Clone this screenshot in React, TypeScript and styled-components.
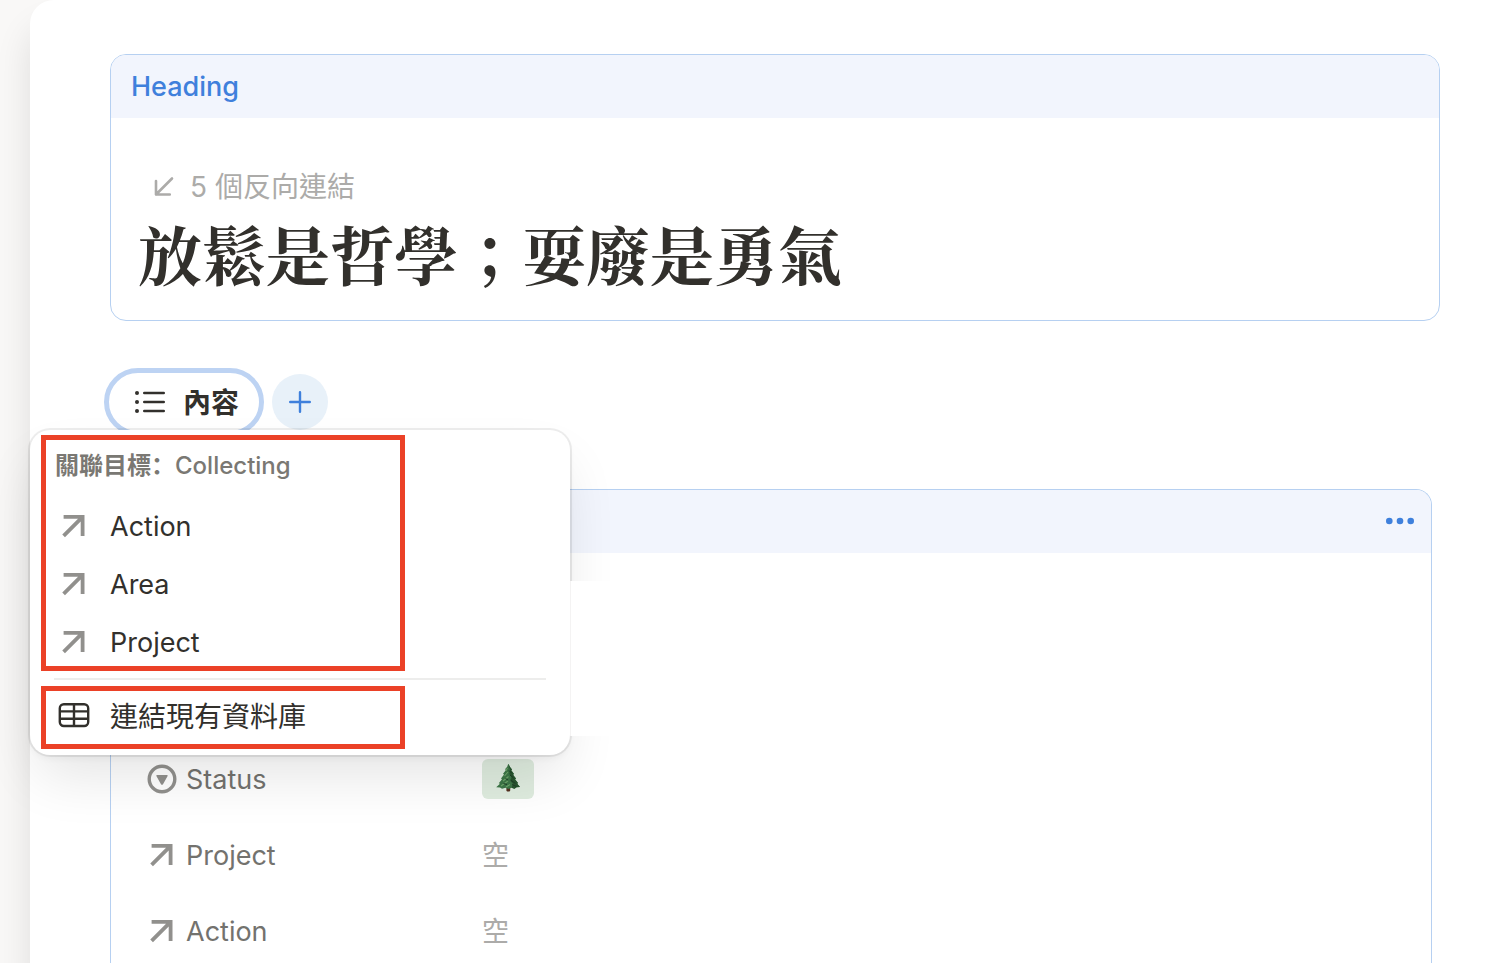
import React from "react";
import styled, { createGlobalStyle } from "styled-components";

const GlobalStyle = createGlobalStyle`
  *, *::before, *::after { box-sizing: border-box; }
  body {
    margin: 0;
    background: #f9f8f7;
    color: #32302c;
    font-family: Inter, "Noto Sans CJK TC", sans-serif;
    font-size: 27px;
    line-height: 40px;
  }
  button { font: inherit; color: inherit; background: none; border: 0; padding: 0; cursor: pointer; }
  svg { display: block; flex: none; }
`;

const Shell = styled.div`
  height: 100vh;
  padding-left: 30px;
  overflow: hidden;
`;

const Page = styled.main`
  display: flex;
  flex-direction: column;
  min-height: 100%;
  padding: 54px 65px 0 74px;
  background: #fff;
  border-radius: 24px 0 0 0;
  box-shadow: 0 28px 36px rgba(0, 0, 0, 0.11);
`;

const Card = styled.section<{ $open?: boolean }>`
  margin-left: 6px;
  margin-right: ${(p) => (p.$open ? 8 : 0)}px;
  flex: ${(p) => (p.$open ? "1 0 auto" : "none")};
  border: 1px solid #b6d0f1;
  border-bottom-width: ${(p) => (p.$open ? 0 : 1)}px;
  border-radius: ${(p) => (p.$open ? "16px 16px 0 0" : "16px")};
  overflow: hidden;
`;

const CardHeader = styled.header<{ $end?: boolean }>`
  display: flex;
  align-items: center;
  justify-content: ${(p) => (p.$end ? "flex-end" : "flex-start")};
  height: 63px;
  padding: 0 16px 0 20px;
  background: #f2f5fd;
  color: #3f80dc;
  font-weight: 500;
`;

const HeadingBody = styled.div`
  padding: 49px 27px 28px;
`;

const Backlinks = styled.button`
  display: flex;
  align-items: center;
  gap: 14px;
  padding-left: 16px;
  color: #acaba9;
  font-size: 28px;
`;

const Title = styled.h1`
  margin: 6px 0 0;
  font-family: "Noto Serif CJK TC", "Songti TC", "Noto Sans CJK TC", serif;
  font-size: 64px;
  line-height: 79px;
  font-weight: 700;
`;

const Tabs = styled.div`
  position: relative;
  z-index: 1;
  display: flex;
  align-items: center;
  gap: 8px;
  margin: 47px 0 53px;
`;

const Tab = styled.button`
  display: flex;
  align-items: center;
  gap: 18px;
  width: 160px;
  height: 68px;
  padding: 2px 0 0 26px;
  border: 5px solid #bdd3f3;
  border-radius: 34px;
  font-size: 28px;
  font-weight: 600;
`;

const AddButton = styled.button`
  display: grid;
  place-items: center;
  width: 56px;
  height: 56px;
  border-radius: 50%;
  background: #e8f1f9;
  color: #3f80dc;
`;

const Menu = styled.div`
  position: absolute;
  top: 62px;
  left: -74px;
  width: 540px;
  padding: 5px 11px 6px;
  background: #fff;
  border-radius: 20px;
  box-shadow:
    0 28px 56px -8px rgba(0, 0, 0, 0.11),
    0 4px 8px -2px rgba(0, 0, 0, 0.06),
    0 0 0 2px rgba(0, 0, 0, 0.07);
`;

const Outlined = styled.div`
  display: flex;
  flex-direction: column;
  gap: 10px;
  width: 364px;
  border: 5px solid #eb4127;
`;

const MenuLabel = styled.div`
  padding-left: 9px;
  color: #7a7873;
  font-family: Inter, "Noto Sans CJK SC", sans-serif;
  font-size: 24px;
  line-height: 52px;
  font-weight: 500;
`;

const LabelPrefix = styled.span`
  font-weight: 600;
`;

const MenuItem = styled.button<{ $tall?: boolean }>`
  display: flex;
  align-items: center;
  gap: 20px;
  height: ${(p) => (p.$tall ? 53 : 48)}px;
  padding: ${(p) => (p.$tall ? "0 0 2px 12px" : "2px 0 0 12px")};
  font-size: ${(p) => (p.$tall ? 28 : 27)}px;
`;

const Divider = styled.hr`
  height: 2px;
  margin: 7px 13px 6px;
  border: 0;
  background: #ededec;
`;

const Underlay = styled.div`
  position: absolute;
  top: 151px;
  left: 100%;
  width: 60px;
  height: 155px;
  background: #fff;
  border-left: 1px solid #f4f3f3;
`;

const Properties = styled.dl`
  margin: 0;
  padding: 188px 36px 0;
`;

const Property = styled.div`
  display: grid;
  grid-template-columns: 335px 1fr;
  align-items: center;
  height: 76px;
`;

const PropertyName = styled.dt`
  display: flex;
  align-items: center;
  gap: 9px;
  padding-top: 2px;
  color: #73726e;
`;

const PropertyValue = styled.dd`
  margin: 0;
  color: #acaba9;
`;

const Empty = styled.span`
  display: block;
  padding-top: 2px;
`;

const Tag = styled.span`
  display: grid;
  place-items: center;
  width: 52px;
  height: 40px;
  border-radius: 6px;
  background: #dfecdf;
`;

const RelationIcon = ({ size = 32 }: { size?: number }) => (
  <svg width={size} height="32" viewBox={size === 32 ? "0 0 32 32" : "1 0 30 32"} fill="none" stroke="#91908d" strokeWidth="3.8" aria-hidden="true">
    <path d="M5.6 5.8H24.6V25M24.6 5.8L5.6 24.8" />
  </svg>
);

const BacklinkIcon = () => (
  <svg width="22" height="24" viewBox="3 1 22 24" fill="none" stroke="currentColor" strokeWidth="2.6" strokeLinecap="round" strokeLinejoin="round" aria-hidden="true">
    <path d="M5 7V20.5H18.8M5 20.5L21 4.5" />
  </svg>
);

const ListIcon = () => (
  <svg width="30" height="28" viewBox="0 1 30 28" fill="currentColor" aria-hidden="true">
    {[5, 14, 23].map((y) => (
      <g key={y}>
        <circle cx="2" cy={y} r="2" />
        <rect x="8" y={y - 1.2} width="22" height="2.4" rx="1.2" />
      </g>
    ))}
  </svg>
);

const PlusIcon = () => (
  <svg width="24" height="24" viewBox="0 0 24 24" stroke="currentColor" strokeWidth="2.4" strokeLinecap="round" aria-hidden="true">
    <path d="M12 2.2V21.8M2.2 12H21.8" />
  </svg>
);

const TableIcon = () => (
  <svg width="32" height="32" viewBox="0 1 32 32" fill="none" stroke="#32302c" strokeWidth="2.4" aria-hidden="true">
    <rect x="1.8" y="4.2" width="28.4" height="21.8" rx="4" />
    <path d="M1.8 11.4H30.2M1.8 18.7H30.2M16 4.2V26" />
  </svg>
);

const StatusIcon = () => (
  <svg width="30" height="32" viewBox="0 1 30 32" aria-hidden="true">
    <circle cx="15" cy="16" r="12.8" fill="none" stroke="#91908d" strokeWidth="3.4" />
    <path d="M10.2 12H19.8Q21.3 12 20.5 13.3L16 21.2Q15 22.5 14 21.2L9.5 13.3Q8.7 12 10.2 12Z" fill="#91908d" />
  </svg>
);

const MoreIcon = () => (
  <svg width="30" height="12" viewBox="0 1 30 12" fill="currentColor" aria-hidden="true">
    <circle cx="4.3" cy="6" r="3.3" />
    <circle cx="15" cy="6" r="3.3" />
    <circle cx="25.7" cy="6" r="3.3" />
  </svg>
);

const TreeIcon = () => (
  <svg width="24" height="30" viewBox="0 1 24 30" role="img" aria-label="Evergreen">
    <rect x="10.4" y="23" width="3.8" height="5.4" rx="0.8" fill="#54301f" />
    <path d="M12.3 0.6L14 4L16 6.5L15.2 7.2L18 11L17 11.8L20 15.5L19 16.3L22 20L21.2 20.8L24 24L20.5 24.3L18.5 25.8L15.5 24.8L12.5 26L9.5 24.8L6 25.8L4 24.5L0.2 24.2L4 20.8L2.8 20.2L6 16.3L5 15.5L8 11.6L7 10.8L10 7L9 6.2L11.2 3.8Z" fill="#3d7647" />
    <path d="M12.3 0.6L14 4L16 6.5L15.2 7.2L18 11L17 11.8L20 15.5L19 16.3L22 20L21.2 20.8L24 24L20.5 24.3L18.5 25.8L15.5 24.8L17 21L14.5 18L15.5 14L13.3 11L14 7Z" fill="#28552f" />
    <path d="M11.5 5L9.8 8M12 9L8.5 13M12.5 13.5L7 18M12 18L5 23M14 21.5L10 24" stroke="#6fa66a" strokeWidth="1.1" fill="none" />
    <path d="M13 7.5L15.5 10M14 12L17.5 15M14.5 17L19.5 20.5M16 21.5L20.5 23.5M9.5 15.5L12 17M7.5 20.5L11 21.5" stroke="#1c3e25" strokeWidth="1" fill="none" />
  </svg>
);

const relations = ["Action", "Area", "Project"];

export default function App() {
  return (
    <>
      <GlobalStyle />
      <Shell>
        <Page>
          <Card>
            <CardHeader>Heading</CardHeader>
            <HeadingBody>
              <Backlinks>
                <BacklinkIcon />5 個反向連結
              </Backlinks>
              <Title>放鬆是哲學；耍廢是勇氣</Title>
            </HeadingBody>
          </Card>

          <Tabs>
            <Tab>
              <ListIcon />
              內容
            </Tab>
            <AddButton aria-label="新增">
              <PlusIcon />
            </AddButton>
            <Menu>
              <Outlined>
                <MenuLabel>
                  <LabelPrefix>關聯目標：</LabelPrefix>Collecting
                </MenuLabel>
                {relations.map((name) => (
                  <MenuItem key={name}>
                    <RelationIcon />
                    {name}
                  </MenuItem>
                ))}
              </Outlined>
              <Divider />
              <Outlined>
                <MenuItem $tall>
                  <TableIcon />
                  連結現有資料庫
                </MenuItem>
              </Outlined>
              <Underlay />
            </Menu>
          </Tabs>

          <Card $open>
            <CardHeader $end>
              <button aria-label="更多">
                <MoreIcon />
              </button>
            </CardHeader>
            <Properties>
              <Property>
                <PropertyName>
                  <StatusIcon />
                  Status
                </PropertyName>
                <PropertyValue>
                  <Tag>
                    <TreeIcon />
                  </Tag>
                </PropertyValue>
              </Property>
              {["Project", "Action"].map((name) => (
                <Property key={name}>
                  <PropertyName>
                    <RelationIcon size={30} />
                    {name}
                  </PropertyName>
                  <PropertyValue>
                    <Empty>空</Empty>
                  </PropertyValue>
                </Property>
              ))}
            </Properties>
          </Card>
        </Page>
      </Shell>
    </>
  );
}
